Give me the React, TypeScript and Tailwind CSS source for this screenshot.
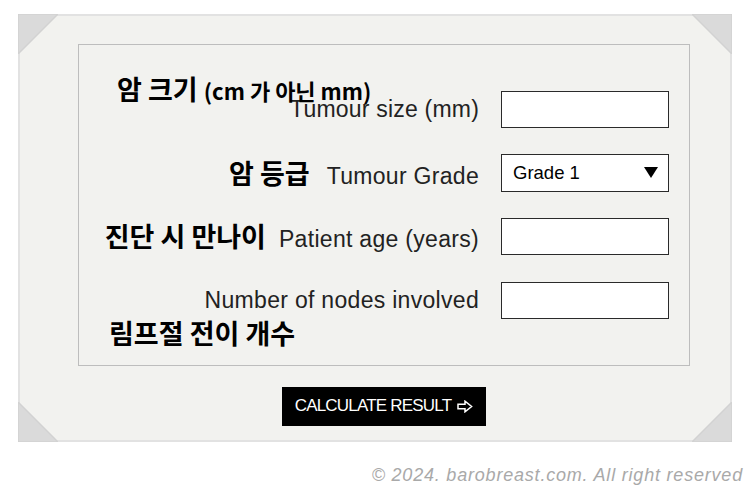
import React from "react";

const KR = '"Noto Sans CJK KR", "Liberation Sans", sans-serif';

function Corner({ pos }: { pos: "tl" | "tr" | "bl" | "br" }) {
  const pts =
    pos === "tl"
      ? "0,0 40,0 0,40"
      : pos === "tr"
      ? "0,0 40,0 40,40"
      : pos === "bl"
      ? "0,0 0,40 40,40"
      : "40,0 40,40 0,40";
  const cls =
    pos === "tl"
      ? "absolute -left-[2px] -top-[2px]"
      : pos === "tr"
      ? "absolute -right-[2px] -top-[2px]"
      : pos === "bl"
      ? "absolute -left-[2px] -bottom-[2px]"
      : "absolute -right-[2px] -bottom-[2px]";
  return (
    <svg className={cls} width="40" height="40" viewBox="0 0 40 40">
      <polygon points={pts} fill="#dadada" stroke="#d2d2d2" strokeWidth="1.5" />
    </svg>
  );
}

export default function App() {
  const label = "text-[23px] leading-none text-[#222] tracking-[0.3px] whitespace-nowrap";
  const inputCls =
    "w-[168px] h-[37px] border border-[#2a2a2a] bg-white shrink-0 outline-none px-2";
  return (
    <div
      className="min-h-[501px] w-[753px] bg-white pl-[18px] pt-[14px]"
      style={{ fontFamily: '"Liberation Sans", Arial, sans-serif' }}
    >
      <div className="relative w-[714px] border-2 border-[#e2e2e2] bg-[#f2f2ef] pl-[58px] pt-[28px] pr-[40px] pb-[14px]">
        <Corner pos="tl" />
        <Corner pos="tr" />
        <Corner pos="bl" />
        <Corner pos="br" />

        <div className="flex flex-col gap-[26.5px] border border-[#bdbdbd] py-[46px] pr-[20px]">
          {/* Row 1 */}
          <div className="relative flex h-[37px] items-center justify-end gap-[22px]">
            <span
              className="absolute left-[38px] -top-[16px] text-[27px] font-bold leading-none text-black whitespace-nowrap"
              style={{ fontFamily: KR }}
            >
              암 크기 <span className="text-[22px]">(cm 가 아닌 mm)</span>
            </span>
            <span className="text-[23px] leading-none text-[#222] tracking-[0.2px] whitespace-nowrap">
              Tumour size (mm)
            </span>
            <input type="text" className={inputCls} />
          </div>

          {/* Row 2 */}
          <div className="flex h-[37px] items-center justify-end gap-[22px]">
            <div className="flex items-baseline">
              <span
                className="mr-[17px] text-[27px] font-bold leading-none text-black whitespace-nowrap"
                style={{ fontFamily: KR }}
              >
                암 등급
              </span>
              <span className="text-[23px] leading-none text-[#222] tracking-[0.3px] whitespace-nowrap">
                Tumour Grade
              </span>
            </div>
            <div className="relative h-[38px] w-[168px] shrink-0 border border-[#2a2a2a] bg-white">
              <select className="h-full w-full appearance-none bg-white pl-[11px] text-[18.5px] text-black outline-none">
                <option>Grade 1</option>
                <option>Grade 2</option>
                <option>Grade 3</option>
              </select>
              <svg
                className="pointer-events-none absolute right-[10px] top-[12px]"
                width="14"
                height="11"
                viewBox="0 0 14 11"
              >
                <polygon points="0,0 14,0 7,11" fill="#000" />
              </svg>
            </div>
          </div>

          {/* Row 3 */}
          <div className="flex h-[37px] items-center justify-end gap-[22px]">
            <div className="flex items-baseline">
              <span
                className="mr-[13px] text-[27px] font-bold leading-none text-black whitespace-nowrap"
                style={{ fontFamily: KR }}
              >
                진단 시 만나이
              </span>
              <span className={label}>Patient age (years)</span>
            </div>
            <input type="text" className={inputCls} />
          </div>

          {/* Row 4 */}
          <div className="relative flex h-[37px] items-center justify-end gap-[22px]">
            <span className={label}>Number of nodes involved</span>
            <input type="text" className={inputCls} />
            <span
              className="absolute left-[30px] top-[37px] text-[27px] font-bold leading-none text-black whitespace-nowrap"
              style={{ fontFamily: KR }}
            >
              림프절 전이 개수
            </span>
          </div>
        </div>

        <div className="mt-[21px] flex justify-center">
          <button className="flex h-[39px] w-[204px] items-center justify-center gap-[6px] bg-black text-[17px] tracking-[-0.8px] text-white">
            <span>CALCULATE RESULT</span>
            <svg width="16" height="13" viewBox="0 0 16 13">
              <path
                d="M1 4.2 H8 V1.2 L14.6 6.5 L8 11.8 V8.8 H1 Z"
                fill="none"
                stroke="#fff"
                strokeWidth="1.5"
                strokeLinejoin="miter"
              />
            </svg>
          </button>
        </div>
      </div>

      <div className="mt-[20px] pr-[10px] text-right text-[18px] italic tracking-[0.8px] text-[#a9a9a9]">
        © 2024. barobreast.com. All right reserved
      </div>
    </div>
  );
}
